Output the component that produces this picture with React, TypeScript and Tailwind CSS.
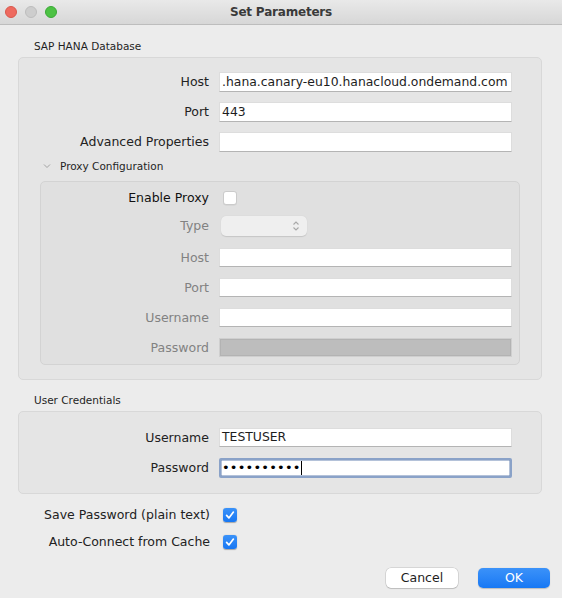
import React from "react";

// Text field as drawn by the Swing/Aqua look: white box, darker bottom edge
function TextField({ value, disabled }: { value?: string; disabled?: boolean }) {
  if (disabled) {
    return (
      <div className="h-[19px] bg-[#bdbdbd] border border-[#cfcfcf] shadow-[inset_0_0_0_1px_#b3b3b3]" />
    );
  }
  return (
    <div className="h-full bg-white border border-[#dddddd] border-b-[#b4b4b4] flex items-center pl-[2px] overflow-hidden whitespace-nowrap text-[12.4px] text-[#1d1d1d]">
      {value}
    </div>
  );
}

function CheckBox({ checked }: { checked?: boolean }) {
  if (checked) {
    return (
      <div className="w-[14px] h-[14px] rounded-[3px] bg-linear-to-b from-[#3a92f9] to-[#1777f3] flex items-center justify-center shadow-[0_0.5px_1px_rgba(0,0,0,0.3)]">
        <svg width="10" height="10" viewBox="0 0 10 10" fill="none">
          <path d="M1.6 5.4 L3.9 7.9 L8.4 2.1" stroke="white" strokeWidth="1.7" strokeLinecap="round" strokeLinejoin="round" />
        </svg>
      </div>
    );
  }
  return (
    <div className="w-[14px] h-[14px] rounded-[3px] bg-white border border-[#cbcbcb] shadow-[0_0.5px_0.5px_rgba(0,0,0,0.08)]" />
  );
}

function Label({ children, muted }: { children: React.ReactNode; muted?: boolean }) {
  return (
    <div className={`text-right text-[12.5px] leading-[14px] ${muted ? "text-[#828282]" : "text-[#222]"}`}>
      {children}
    </div>
  );
}

export default function App() {
  return (
    <div className="w-[562px] h-[598px] overflow-hidden bg-[#ececec] flex flex-col font-['DejaVu_Sans',sans-serif] text-[#222]">
      {/* Title bar */}
      <div className="h-[25px] shrink-0 grid grid-cols-[1fr_auto_1fr] items-center border-b border-[#bdbdbd] bg-linear-to-b from-[#e9e9e9] to-[#d7d7d7]">
        <div className="flex items-center gap-[8px] pl-[5px]">
          <div className="w-[12px] h-[12px] rounded-full bg-[#ee6a5f] border border-[#d9584c]" />
          <div className="w-[12px] h-[12px] rounded-full bg-[#cdcdcd] border border-[#bdbdbd]" />
          <div className="w-[12px] h-[12px] rounded-full bg-[#4dc244] border border-[#3aa936]" />
        </div>
        <div className="font-bold text-[12px] text-[#3a3a3a] tracking-[-0.2px]">Set Parameters</div>
        <div />
      </div>

      {/* SAP HANA Database */}
      <div className="mt-[14px] pl-[34px] h-[14px] text-[10.5px] leading-[14px] text-[#1f1f1f]">SAP HANA Database</div>
      <div className="mt-[4px] ml-[18px] w-[524px] rounded-[5px] border border-[#d8d8d8] bg-[#e5e5e5] pt-[14px] pb-[14px]">
        <div className="grid grid-cols-[190px_293px] auto-rows-[20px] gap-x-[10px] gap-y-[10px] items-center">
          <Label>Host</Label>
          <TextField value=".hana.canary-eu10.hanacloud.ondemand.com" />
          <Label>Port</Label>
          <TextField value="443" />
          <Label>Advanced Properties</Label>
          <TextField />
        </div>

        <div className="mt-[7px] h-[14px] flex items-center pl-[24px]">
          <svg width="8" height="6" viewBox="0 0 8 6" fill="none">
            <path d="M1 1.5 L4 4.5 L7 1.5" stroke="#a3a3a3" strokeWidth="1" />
          </svg>
          <span className="ml-[9px] text-[10.5px] leading-[14px] text-[#1f1f1f]">Proxy Configuration</span>
        </div>

        {/* Proxy box */}
        <div className="mt-[8px] ml-[21px] w-[480px] rounded-[5px] border border-[#d3d3d3] bg-[#e0e0e0] pt-[2px] pb-[7px]">
          <div className="grid grid-cols-[168px_293px] auto-rows-[28px] gap-x-[10px] items-center">
            <div className="text-right text-[12.5px] leading-[14px] text-[#111]">Enable Proxy</div>
            <div className="pl-[4px]">
              <CheckBox />
            </div>
            <Label muted>Type</Label>
            <div className="pl-[2px]">
              <div className="w-[86px] h-[20px] rounded-[5px] bg-[#efefef] shadow-[0_0.5px_1px_rgba(0,0,0,0.12)] flex items-center justify-end pr-[7px]">
                <svg width="8" height="12" viewBox="0 0 8 12" fill="none">
                  <path d="M1.5 4.5 L4 2 L6.5 4.5" stroke="#a8a8a8" strokeWidth="1.1" />
                  <path d="M1.5 7.5 L4 10 L6.5 7.5" stroke="#a8a8a8" strokeWidth="1.1" />
                </svg>
              </div>
            </div>
          </div>
          <div className="mt-[8px] grid grid-cols-[168px_293px] auto-rows-[19px] gap-x-[10px] gap-y-[11px] items-center">
            <Label muted>Host</Label>
            <TextField />
            <Label muted>Port</Label>
            <TextField />
            <Label muted>Username</Label>
            <TextField />
            <Label muted>Password</Label>
            <TextField disabled />
          </div>
        </div>
      </div>

      {/* User Credentials */}
      <div className="mt-[13px] pl-[34px] h-[14px] text-[10.5px] leading-[14px] text-[#1f1f1f]">User Credentials</div>
      <div className="mt-[4px] ml-[18px] w-[524px] rounded-[5px] border border-[#d8d8d8] bg-[#e5e5e5] pt-[16px] pb-[15px]">
        <div className="grid grid-cols-[190px_293px] gap-x-[10px] gap-y-[11px] items-center">
          <Label>Username</Label>
          <div className="h-[19px]">
            <TextField value="TESTUSER" />
          </div>
          <Label>Password</Label>
          <div className="h-[20px] bg-white border-2 border-[#8aa2c8] shadow-[inset_0_0_0_0.5px_#6a85b3] rounded-[2px] flex items-center pl-[1px]">
            <span className="text-[13px] leading-[14px] tracking-[0.2px] text-black">••••••••••</span>
            <span className="w-[1px] h-[14px] bg-black" />
          </div>
        </div>
      </div>

      {/* Options */}
      <div className="mt-[7px] grid grid-cols-[210px_auto] auto-rows-[27px] gap-x-[13px] items-center">
        <Label>Save Password (plain text)</Label>
        <CheckBox checked />
        <Label>Auto-Connect from Cache</Label>
        <CheckBox checked />
      </div>

      {/* Buttons */}
      <div className="mt-[13px] flex justify-end gap-[20px] pr-[12px]">
        <button className="w-[72px] h-[20px] rounded-[5px] bg-white text-[12.5px] leading-[14px] text-[#1e1e1e] shadow-[0_0_0_0.5px_rgba(0,0,0,0.18),0_1px_1px_rgba(0,0,0,0.12)]">
          Cancel
        </button>
        <button className="w-[72px] h-[20px] rounded-[5px] bg-linear-to-b from-[#3b92f9] to-[#1678f4] text-[12.5px] leading-[14px] text-white shadow-[0_0.5px_1px_rgba(0,0,0,0.2)]">
          OK
        </button>
      </div>
    </div>
  );
}
